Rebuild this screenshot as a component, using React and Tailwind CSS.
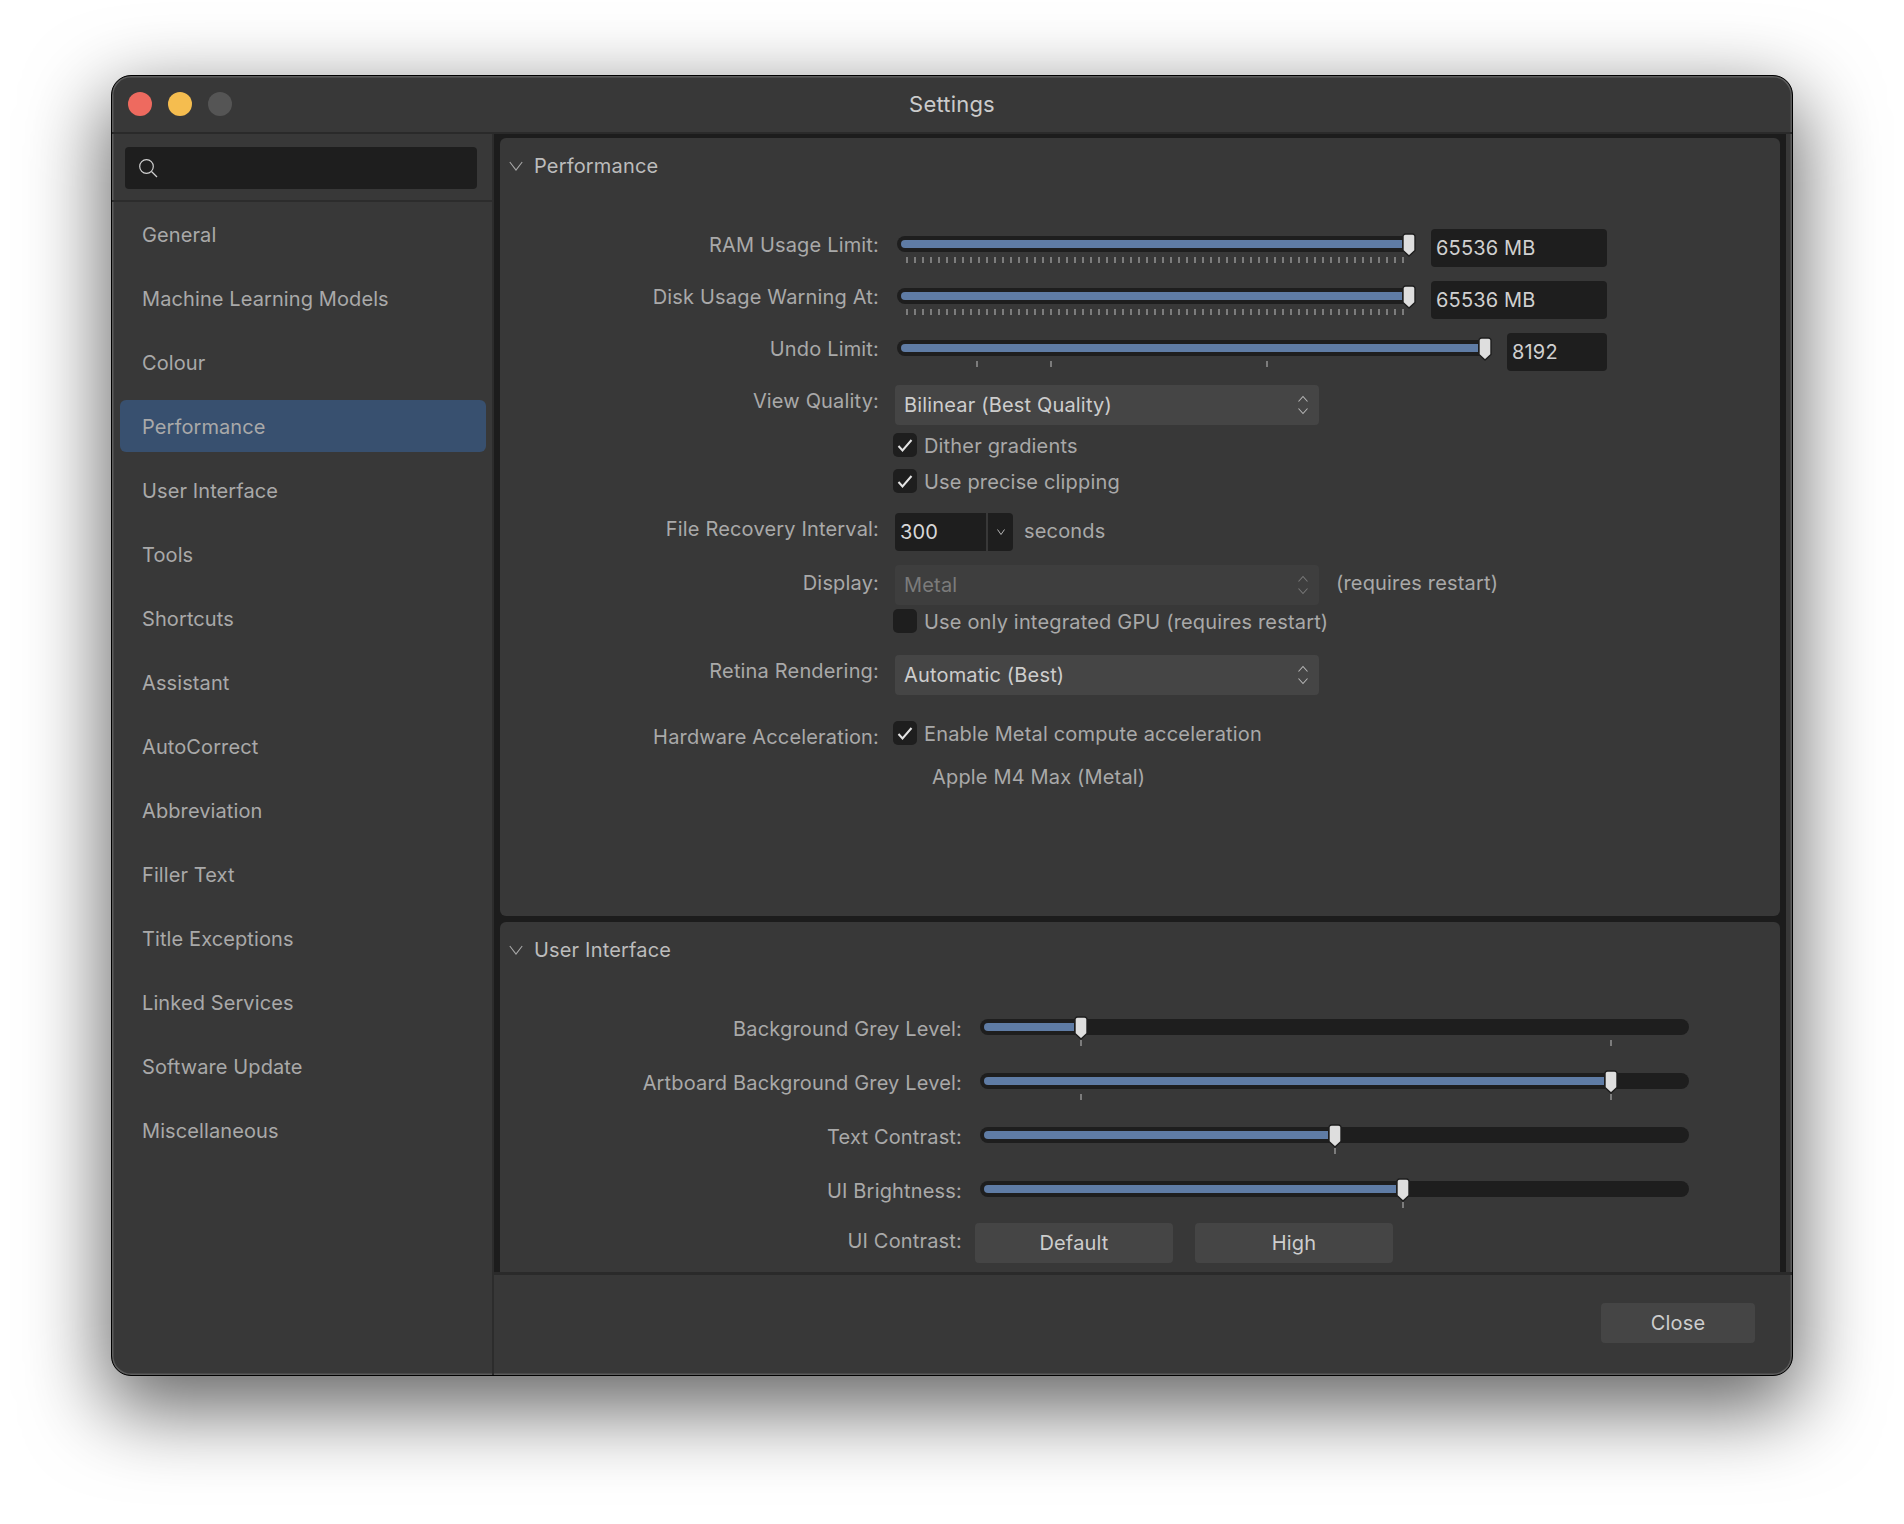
import React from "react";

const navItems = ["General","Machine Learning Models","Colour","Performance","User Interface","Tools","Shortcuts","Assistant","AutoCorrect","Abbreviation","Filler Text","Title Exceptions","Linked Services","Software Update","Miscellaneous"];
const denseTicks = Array.from({ length: 63 }, (_, i) => 10 + i * 8);

function Thumb({ pos }) {
  return (
    <svg className="absolute top-[-3px]" style={{ left: pos - 7 }} width="14" height="24" viewBox="0 0 14 24">
      <path d="M3.5 1h7a2.5 2.5 0 0 1 2.5 2.5V17.5L7 23 1 17.5V3.5A2.5 2.5 0 0 1 3.5 1z" fill="#dedede" stroke="#1e1e1e" strokeWidth="1.4" />
    </svg>
  );
}

function Slider({ className, pos, ticks = [] }) {
  return (
    <div className={`relative h-[16px] shrink-0 rounded-full bg-[#1e1e1e] ${className}`}>
      <div className="absolute left-[4px] top-[4px] h-[8px] rounded-l-full bg-[#5f7ca5]" style={{ width: pos - 11 }} />
      {ticks.map((t) => (
        <div key={t} className="absolute top-[21px] h-[6px] w-[2px] bg-[#7c7c7c]" style={{ left: t - 1 }} />
      ))}
      <Thumb pos={pos} />
    </div>
  );
}

function UpDown({ dim }) {
  return (
    <svg width="12" height="20" viewBox="0 0 12 20" fill="none" stroke={dim ? "#777777" : "#b5b5b5"} strokeWidth="1.1">
      <path d="M1.5 6.5 6 1.5l4.5 5" />
      <path d="M1.5 13.5 6 18.5l4.5-5" />
    </svg>
  );
}

function Select({ text, dim }) {
  return (
    <div className={`flex h-[40px] w-[424px] items-center justify-between rounded-[4px] pl-[9px] pr-[10px] ${dim ? "bg-[#3e3e3e] text-[#7b7b7b]" : "bg-[#454545] text-[#cdcdcd]"}`}>
      <span>{text}</span>
      <UpDown dim={dim} />
    </div>
  );
}

function Check({ checked, label }) {
  return (
    <div className="flex h-[24px] items-center">
      <div className="ml-[-2px] flex h-[24px] w-[24px] items-center justify-center rounded-[5px] bg-[#1e1e1e]">
        {checked && (
          <svg width="24" height="24" viewBox="0 0 24 24" fill="none" stroke="#e4e4e4" strokeWidth="2">
            <path d="M5.5 13 9.5 17.5 18.5 7" />
          </svg>
        )}
      </div>
      <span className="ml-[7px] pt-[2px]">{label}</span>
    </div>
  );
}

function Row({ label, labelClass = "w-[379px] pt-[4px]", rowClass, children }) {
  return (
    <div className={`flex ${rowClass}`}>
      <div className={`shrink-0 text-right ${labelClass}`}>{label}</div>
      {children}
    </div>
  );
}

function Value({ className, children }) {
  return (
    <div className={`flex h-[38px] items-center rounded-[4px] bg-[#1e1e1e] pl-[5px] text-[#d0d0d0] ${className}`}>{children}</div>
  );
}

function SectionHeader({ title }) {
  return (
    <div className="flex h-[56px] items-center pl-[9px] text-[#bcbcbc]">
      <svg width="14" height="10" viewBox="0 0 14 10" fill="none" stroke="#a8a8a8" strokeWidth="1.1">
        <path d="M.8 1 7 9l6.2-8" />
      </svg>
      <span className="ml-[11px]">{title}</span>
    </div>
  );
}

function UISlider({ label, pos, ticks, rowClass = "h-[54px]" }) {
  return (
    <Row label={label} labelClass="w-[462px] pt-[2px]" rowClass={rowClass}>
      <Slider className="ml-[18px] mt-[4px] w-[709px]" pos={pos} ticks={ticks} />
    </Row>
  );
}

export default function App() {
  return (
    <div className="h-[1524px] overflow-hidden bg-white pl-[111px] pt-[75px] font-['Inter',sans-serif] text-[20px] leading-[24px] tracking-[0.17px] text-[#a9a9a9] antialiased">
      <div className="flex h-[1301px] w-[1682px] flex-col overflow-hidden rounded-[20px] border border-black bg-[#383838] shadow-[0_28px_80px_6px_rgba(0,0,0,0.6),inset_0_0_0_1.5px_#5c5c5c]">
        <div className="relative flex h-[58px] shrink-0 items-center justify-center border-b-2 border-[#2a2a2a]">
          <div className="absolute left-[16px] top-[16px] flex gap-[16px]">
            <div className="h-[24px] w-[24px] rounded-full bg-[#ee6a5f]" />
            <div className="h-[24px] w-[24px] rounded-full bg-[#f5bd4f]" />
            <div className="h-[24px] w-[24px] rounded-full bg-[#555555]" />
          </div>
          <span className="text-[22px] tracking-[0.2px] text-[#cbcbcb]">Settings</span>
        </div>

        <div className="flex min-h-0 flex-1">
          <div className="w-[382px] shrink-0 border-r-2 border-[#2c2c2c] tracking-[0.1px]">
            <div className="h-[68px] border-b-2 border-[#2c2c2c] pl-[13px] pt-[13px]">
              <div className="flex h-[42px] w-[352px] items-center rounded-[4px] bg-[#1e1e1e] pl-[13px]">
                <svg width="20" height="20" viewBox="0 0 20 20" fill="none" stroke="#d0d0d0" strokeWidth="1.2">
                  <circle cx="8.5" cy="8.5" r="6.8" />
                  <path d="M13.5 13.5 19 19" />
                </svg>
              </div>
            </div>
            <div className="mt-[1px]">
              {navItems.map((n) => (
                <div key={n} className="flex h-[64px] items-center">
                  <div className={`mb-[2px] ml-[8px] flex h-[52px] w-[366px] items-center rounded-[6px] pl-[22px] pt-[2px] ${n === "Performance" ? "bg-[#38506f]" : ""}`}>{n}</div>
                </div>
              ))}
            </div>
          </div>

          <div className="flex min-w-0 flex-1 flex-col">
            <div className="mr-[6px] flex h-[1138px] shrink-0 flex-col gap-[6px] overflow-hidden bg-[#1c1c1c] pb-0 pl-[6px] pr-[6px] pt-[4px]">
              <div className="h-[778px] shrink-0 rounded-[6px] bg-[#383838]">
                <SectionHeader title="Performance" />
                <div className="pt-[35px]">
                  <Row label="RAM Usage Limit:" rowClass="h-[52px]">
                    <Slider className="ml-[18px] mt-[7px] w-[515px]" pos={512} ticks={denseTicks} />
                    <Value className="ml-[19px] w-[176px]">65536 MB</Value>
                  </Row>
                  <Row label="Disk Usage Warning At:" rowClass="h-[52px]">
                    <Slider className="ml-[18px] mt-[7px] w-[515px]" pos={512} ticks={denseTicks} />
                    <Value className="ml-[19px] w-[176px]">65536 MB</Value>
                  </Row>
                  <Row label="Undo Limit:" rowClass="h-[52px]">
                    <Slider className="ml-[18px] mt-[7px] w-[591px]" pos={588} ticks={[80, 154, 370]} />
                    <Value className="ml-[19px] w-[100px]">8192</Value>
                  </Row>
                  <Row label="View Quality:" rowClass="h-[48px]">
                    <div className="ml-[16px]"><Select text="Bilinear (Best Quality)" /></div>
                  </Row>
                  <div className="ml-[395px] flex flex-col gap-[12px]">
                    <Check checked label="Dither gradients" />
                    <Check checked label="Use precise clipping" />
                  </div>
                  <Row label="File Recovery Interval:" rowClass="mt-[20px] h-[52px]">
                    <div className="ml-[16px] flex h-[38px] w-[118px] overflow-hidden rounded-[4px] bg-[#1e1e1e] text-[#d8d8d8]">
                      <div className="flex w-[93px] items-center border-r-2 border-[#383838] pl-[5px]">300</div>
                      <div className="flex flex-1 items-center justify-center">
                        <svg width="8" height="6" viewBox="0 0 8 6" fill="none" stroke="#b5b5b5" strokeWidth="1"><path d="M.5.5 4 5.500 7.500.5" /></svg>
                      </div>
                    </div>
                    <span className="ml-[11px] mt-[6px]">seconds</span>
                  </Row>
                  <Row label="Display:" labelClass="w-[379px] pt-[6px]" rowClass="h-[44px]">
                    <div className="ml-[16px]"><Select text="Metal" dim /></div>
                    <span className="ml-[17px] mt-[6px]">(requires restart)</span>
                  </Row>
                  <div className="ml-[395px]">
                    <Check label="Use only integrated GPU (requires restart)" />
                  </div>
                  <Row label="Retina Rendering:" rowClass="mt-[22px]">
                    <div className="ml-[16px]"><Select text="Automatic (Best)" /></div>
                  </Row>
                  <Row label="Hardware Acceleration:" rowClass="mt-[26px]">
                    <div className="ml-[16px]"><Check checked label="Enable Metal compute acceleration" /></div>
                  </Row>
                  <div className="ml-[432px] mt-[16px]">Apple M4 Max (Metal)</div>
                </div>
              </div>

              <div className="min-h-0 flex-1 rounded-t-[6px] bg-[#383838]">
                <SectionHeader title="User Interface" />
                <div className="pt-[37px]">
                  <UISlider label="Background Grey Level:" pos={101} ticks={[101, 631]} />
                  <UISlider label="Artboard Background Grey Level:" pos={631} ticks={[101, 631]} />
                  <UISlider label="Text Contrast:" pos={355} ticks={[355]} />
                  <UISlider label="UI Brightness:" pos={423} ticks={[423]} rowClass="h-[46px]" />
                  <Row label="UI Contrast:" labelClass="w-[462px] pt-[6px]">
                    <div className="ml-[13px] flex gap-[22px] text-[#cdcdcd]">
                      <div className="flex h-[40px] w-[198px] items-center justify-center rounded-[4px] bg-[#454545]">Default</div>
                      <div className="flex h-[40px] w-[198px] items-center justify-center rounded-[4px] bg-[#454545]">High</div>
                    </div>
                  </Row>
                </div>
              </div>
            </div>

            <div className="flex flex-1 justify-end border-t-[3px] border-[#2a2a2a] pr-[37px] pt-[28px]">
              <div className="flex h-[40px] w-[154px] items-center justify-center rounded-[4px] bg-[#454545] text-[#cdcdcd]">Close</div>
            </div>
          </div>
        </div>
      </div>
    </div>
  );
}
